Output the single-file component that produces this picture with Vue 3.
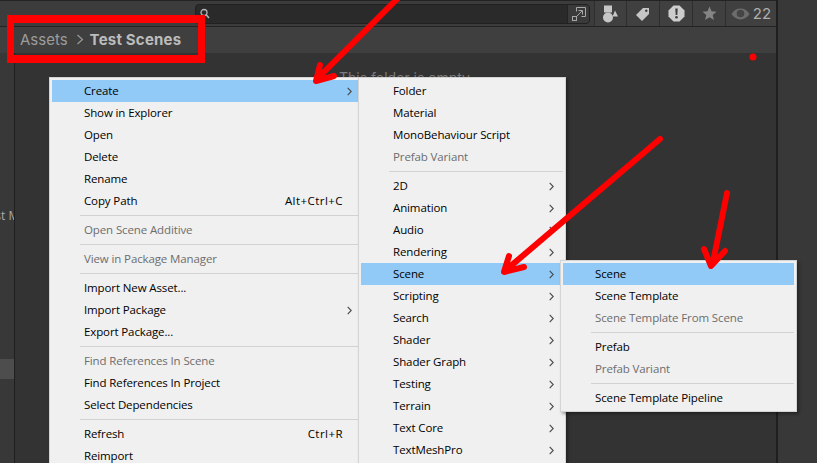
<script setup>
const mainItems = [
  { t: 'Create', sub: true, active: true },
  { t: 'Show in Explorer' },
  { t: 'Open' },
  { t: 'Delete' },
  { t: 'Rename' },
  { t: 'Copy Path', key: 'Alt+Ctrl+C' },
  { sep: true },
  { t: 'Open Scene Additive', off: true },
  { sep: true },
  { t: 'View in Package Manager', off: true },
  { sep: true },
  { t: 'Import New Asset...' },
  { t: 'Import Package', sub: true },
  { t: 'Export Package...' },
  { sep: true },
  { t: 'Find References In Scene', off: true },
  { t: 'Find References In Project' },
  { t: 'Select Dependencies' },
  { sep: true },
  { t: 'Refresh', key: 'Ctrl+R' },
  { t: 'Reimport' }
]
const createItems = [
  { t: 'Folder' },
  { t: 'Material' },
  { t: 'MonoBehaviour Script' },
  { t: 'Prefab Variant', off: true },
  { sep: true },
  { t: '2D', sub: true },
  { t: 'Animation', sub: true },
  { t: 'Audio', sub: true },
  { t: 'Rendering', sub: true },
  { t: 'Scene', sub: true, active: true },
  { t: 'Scripting', sub: true },
  { t: 'Search', sub: true },
  { t: 'Shader', sub: true },
  { t: 'Shader Graph', sub: true },
  { t: 'Testing', sub: true },
  { t: 'Terrain', sub: true },
  { t: 'Text Core', sub: true },
  { t: 'TextMeshPro', sub: true }
]
const sceneItems = [
  { t: 'Scene', active: true },
  { t: 'Scene Template' },
  { t: 'Scene Template From Scene', off: true },
  { sep: true },
  { t: 'Prefab' },
  { t: 'Prefab Variant', off: true },
  { sep: true },
  { t: 'Scene Template Pipeline' }
]
const menus = [
  { id: 'main', items: mainItems },
  { id: 'create', items: createItems },
  { id: 'scene', items: sceneItems }
]
</script>

<template>
  <div class="window">
    <div class="main">
      <header class="toolbar">
        <div class="search">
          <svg class="lens" width="12" height="12" viewBox="0 0 12 12">
            <circle cx="5" cy="4.5" r="3" fill="none" stroke="#b4b4b4" stroke-width="1.3" />
            <path d="M7.2 6.8 10 10" stroke="#b4b4b4" stroke-width="1.6" />
          </svg>
          <div class="expand">
            <svg width="16" height="16" viewBox="0 0 16 16" fill="none" stroke="#a8a8a8" stroke-width="1">
              <path d="M5.5 5.5V1.500h9v9h-4" />
              <rect x="1.5" y="10.5" width="4" height="4" />
              <path d="M6 10 11 5M7.500 4.500H11.500V8.500" />
            </svg>
          </div>
        </div>
        <div class="tool first">
          <svg width="18" height="18" viewBox="0 0 18 18" fill="#c6c6c6">
            <rect x="2" y=".5" width="8" height="7" />
            <circle cx="6" cy="12.500" r="5" />
            <path d="M13 5.500 16 11.500H10.500Z" />
          </svg>
        </div>
        <div class="tool">
          <svg width="16" height="16" viewBox="0 0 16 16">
            <path fill="#c6c6c6" d="M8 2h6v6l-7 7-6-6z" />
            <circle cx="11.300" cy="4.700" r="1.200" fill="#3c3c3c" />
          </svg>
        </div>
        <div class="tool">
          <svg width="17" height="17" viewBox="0 0 17 17">
            <path fill="#cdcdcd" d="M5.500.5h6l5 5v6l-5 5h-6l-5-5v-6z" />
            <path fill="#3c3c3c" d="M7.300 3.500h2.400l-.4 6.500H7.700z" />
            <circle cx="8.500" cy="12.300" r="1.300" fill="#3c3c3c" />
          </svg>
        </div>
        <div class="tool">
          <svg width="15" height="15" viewBox="0 0 15 15">
            <path fill="#858585" d="M7.500.5 9.500 5.300l5 .4-3.800 3.300 1.200 5-4.400-2.700L3.100 14l1.200-5L.5 5.700l5-.4z" />
          </svg>
        </div>
        <div class="tool eye">
          <svg width="19" height="12" viewBox="0 0 19 12">
            <path fill="#6c6c6c" d="M.5 6C3 2.200 6 .6 9.500.6S16 2.200 18.500 6C16 9.800 13 11.400 9.500 11.400S3 9.800.5 6z" />
            <circle cx="9.500" cy="5.500" r="3.800" fill="#454545" />
          </svg>
          <span class="count">22</span>
        </div>
      </header>
      <nav class="crumbs">
        <span class="crumb">Assets</span>
        <svg class="crumb-sep" width="8" height="11" viewBox="0 0 8 11">
          <path d="M1.500 1 6.500 5.500 1.500 10" fill="none" stroke="#9a9a9a" stroke-width="1.200" />
        </svg>
        <span class="crumb current">Test Scenes</span>
      </nav>
      <div class="body">
        <aside class="side">
          <div class="side-label">Test Maps</div>
          <div class="side-selected"></div>
        </aside>
        <section class="content">
          <div class="empty">This folder is empty</div>
        </section>
      </div>
    </div>
    <div class="strip"></div>

    <div v-for="menu in menus" :key="menu.id" class="menu" :class="menu.id">
      <template v-for="(item, i) in menu.items" :key="i">
        <div v-if="item.sep" class="sep"></div>
        <div v-else class="row" :class="{ active: item.active, off: item.off }">
          <span class="label">{{ item.t }}</span>
          <span v-if="item.key" class="key">{{ item.key }}</span>
          <svg v-if="item.sub" class="chev" width="5" height="9" viewBox="0 0 5 9">
            <path d="M.7.8 4.200 4.500.7 8.200" fill="none" stroke="#4a4a4a" stroke-width="1.100" />
          </svg>
        </div>
      </template>
    </div>

    <div class="callout"></div>
    <svg class="arrows" width="817" height="463" viewBox="0 0 817 463" fill="none" stroke="#fe0000" stroke-width="6" stroke-linecap="round" stroke-linejoin="round">
      <path d="M400-4 318 78M320 65 316 81 334 76" />
      <path d="M660 139 506 270M509 256 504 272 524 267" />
      <path d="M727 193 713 262M704 249 711 266 725 251" />
      <circle cx="753" cy="57" r="3.500" fill="#fe0000" stroke="none" />
    </svg>
  </div>
</template>

<style scoped>
.window {
  position: relative;
  display: flex;
  width: 817px;
  height: 463px;
  overflow: hidden;
  background: #383838;
  font-family: "Open Sans", "Noto Sans", sans-serif;
}
.main {
  display: flex;
  flex-direction: column;
  width: 778px;
  flex: none;
  border-right: 2px solid #1f1f1f;
  box-sizing: border-box;
}
.strip {
  flex: 1;
  background: #383838;
}
.toolbar {
  display: flex;
  height: 27px;
  flex: none;
  box-sizing: border-box;
  background: #3c3c3c;
  border-top: 1px solid #232323;
  border-bottom: 1px solid #232323;
  padding-left: 195px;
}
.search {
  display: flex;
  align-items: center;
  justify-content: space-between;
  width: 395px;
  height: 20px;
  margin-top: 3px;
  box-sizing: border-box;
  background: #2a2a2a;
  border: 1px solid #212121;
  border-radius: 4px;
  padding-left: 3px;
}
.expand {
  display: flex;
  align-items: center;
  justify-content: center;
  width: 21px;
  height: 18px;
  background: #3a3a3a;
  border-left: 1px solid #232323;
  border-radius: 0 3px 3px 0;
}
.tool {
  display: flex;
  align-items: center;
  justify-content: center;
  width: 33px;
  box-sizing: border-box;
  background: #404040;
  border-right: 1px solid #2e2e2e;
}
.tool.first {
  margin-left: 4px;
  border-left: 1px solid #2e2e2e;
}
.tool.eye {
  flex: 1;
  gap: 3px;
  border-right: 0;
}
.count {
  font-family: Inter, sans-serif;
  font-size: 15px;
  color: #aeaeae;
}
.crumbs {
  display: flex;
  align-items: center;
  height: 26px;
  flex: none;
  padding-left: 20px;
  padding-bottom: 2px;
  box-sizing: border-box;
  background: #3f3f3f;
}
.crumb {
  font-family: Inter, sans-serif;
  font-size: 15px;
  color: #9c9c9c;
}
.crumb.current {
  font-weight: 700;
  letter-spacing: 0.2px;
  color: #bcbcbc;
}
.crumb-sep {
  margin: 0 6px 0 8px;
}
.body {
  display: flex;
  flex: 1;
  min-height: 0;
}
.side {
  width: 15px;
  flex: none;
  box-sizing: border-box;
  background: #383838;
  border-right: 1px solid #1f1f1f;
  overflow: hidden;
}
.side-label {
  margin-top: 154px;
  width: 70px;
  margin-left: -18px;
  font-size: 12px;
  line-height: 18px;
  color: #aaaaaa;
  white-space: nowrap;
}
.side-selected {
  height: 20px;
  margin-top: 134px;
  background: #4d4d4d;
}
.content {
  flex: 1;
  background: #333333;
}
.empty {
  margin-top: 17px;
  margin-left: 324px;
  font-family: Inter, sans-serif;
  font-size: 14px;
  line-height: 16px;
  color: #7c7c7c;
}
.menu {
  position: absolute;
  box-sizing: border-box;
  background: #f0f0f0;
  border: 1px solid #d4d4d4;
  padding: 2px;
  box-shadow: 2px 2px 3px rgba(0, 0, 0, 0.35);
}
.menu.main {
  left: 49px;
  top: 77px;
  width: 314px;
  border-right: 0;
}
.menu.create {
  left: 358px;
  top: 77px;
  width: 208px;
}
.menu.scene {
  left: 560px;
  top: 260px;
  width: 237px;
}
.row {
  display: flex;
  align-items: center;
  height: 22px;
  box-sizing: border-box;
  padding-left: 32px;
  padding-bottom: 2px;
  font-size: 11.5px;
  letter-spacing: -0.12px;
  color: #000000;
  white-space: nowrap;
}
.row.active {
  background: #91c9f7;
}
.row.off {
  color: #6d6d6d;
}
.label {
  flex: 1;
}
.key {
  margin-right: 18px;
  letter-spacing: 0.45px;
}
.chev {
  margin-right: 9px;
  margin-top: 2px;
}
.sep {
  height: 7px;
  margin-left: 28px;
  padding-top: 3px;
  box-sizing: border-box;
}
.sep::before {
  content: "";
  display: block;
  height: 1px;
  background: #d2d2d2;
}
.callout {
  position: absolute;
  left: 7px;
  top: 15px;
  width: 198px;
  height: 48px;
  box-sizing: border-box;
  border: 8px solid #fe0000;
  border-left-width: 7px;
  border-right-width: 7px;
}
.arrows {
  position: absolute;
  left: 0;
  top: 0;
  pointer-events: none;
}
</style>
